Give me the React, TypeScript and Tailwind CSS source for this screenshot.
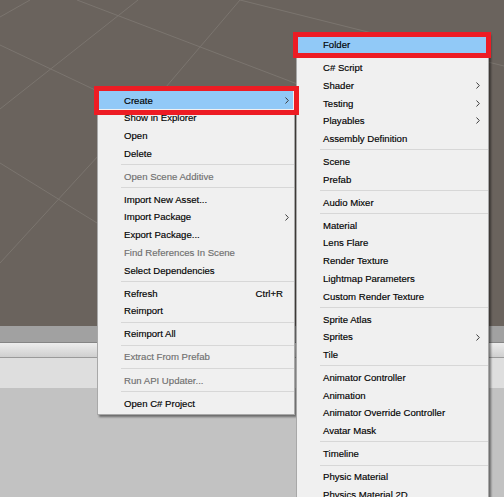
type Item = {
  label?: string
  sep?: boolean
  disabled?: boolean
  sub?: boolean
  shortcut?: string
  hi?: boolean
}

const leftItems: Item[] = [
  { label: 'Create', sub: true, hi: true },
  { label: 'Show in Explorer' },
  { label: 'Open' },
  { label: 'Delete' },
  { sep: true },
  { label: 'Open Scene Additive', disabled: true },
  { sep: true },
  { label: 'Import New Asset...' },
  { label: 'Import Package', sub: true },
  { label: 'Export Package...' },
  { label: 'Find References In Scene', disabled: true },
  { label: 'Select Dependencies' },
  { sep: true },
  { label: 'Refresh', shortcut: 'Ctrl+R' },
  { label: 'Reimport' },
  { sep: true },
  { label: 'Reimport All' },
  { sep: true },
  { label: 'Extract From Prefab', disabled: true },
  { sep: true },
  { label: 'Run API Updater...', disabled: true },
  { sep: true },
  { label: 'Open C# Project' },
]

const rightItems: Item[] = [
  { label: 'Folder', hi: true },
  { sep: true },
  { label: 'C# Script' },
  { label: 'Shader', sub: true },
  { label: 'Testing', sub: true },
  { label: 'Playables', sub: true },
  { label: 'Assembly Definition' },
  { sep: true },
  { label: 'Scene' },
  { label: 'Prefab' },
  { sep: true },
  { label: 'Audio Mixer' },
  { sep: true },
  { label: 'Material' },
  { label: 'Lens Flare' },
  { label: 'Render Texture' },
  { label: 'Lightmap Parameters' },
  { label: 'Custom Render Texture' },
  { sep: true },
  { label: 'Sprite Atlas' },
  { label: 'Sprites', sub: true },
  { label: 'Tile' },
  { sep: true },
  { label: 'Animator Controller' },
  { label: 'Animation' },
  { label: 'Animator Override Controller' },
  { label: 'Avatar Mask' },
  { sep: true },
  { label: 'Timeline' },
  { sep: true },
  { label: 'Physic Material' },
  { label: 'Physics Material 2D' },
  { sep: true },
  { label: 'GUI Skin' },
  { label: 'Custom Font' },
]

function Chevron() {
  return (
    <svg width="4" height="7" viewBox="0 0 4 7" className="block shrink-0">
      <path d="M0.5 0.5L3.3 3.5L0.5 6.5" fill="none" stroke="#3c3c3c" strokeWidth="1" />
    </svg>
  )
}

function Menu({ items, pr, redBox }: { items: Item[]; pr: string; redBox: string }) {
  return (
    <>
      {items.map((it, i) =>
        it.sep ? (
          <div key={i} className="h-[5.4px] flex items-center pl-[23px]">
            <div className="h-px w-full bg-[#d7d7d7]" />
          </div>
        ) : (
          <div
            key={i}
            className={`relative mx-px h-[17.7px] flex items-center pl-[25px] pt-px ${pr} ${it.hi ? 'bg-[#91c9f7]' : ''}`}
          >
            <span className={`flex-1 whitespace-nowrap ${it.disabled ? 'text-[#6f6f6f]' : 'text-black'}`}>{it.label}</span>
            {it.shortcut && <span className="mr-[2px] text-black">{it.shortcut}</span>}
            {it.sub ? <Chevron /> : <div className="w-[4px]" />}
            {it.hi && <div className={`absolute z-10 border-[#ed1c24] ${redBox}`} />}
          </div>
        )
      )}
    </>
  )
}

export default function App() {
  return (
    <div className="relative w-[504px] h-[497px] overflow-hidden flex flex-col font-['Liberation_Sans',Arial,sans-serif] text-[9.6px] leading-none [-webkit-text-stroke:0.15px]">
      {/* scene view */}
      <div className="h-[326px] shrink-0 bg-[#6a635d]">
        <svg width="504" height="326" className="block">
          <g stroke="#7b756f" strokeWidth="1" fill="none">
            <line x1="0" y1="17" x2="30" y2="0" />
            <line x1="0" y1="109" x2="138" y2="0" />
            <line x1="240" y1="0" x2="160" y2="94" />
            <line x1="0" y1="263" x2="110" y2="143" />
            <line x1="0" y1="45" x2="110" y2="97" />
            <line x1="77" y1="0" x2="300" y2="85" />
            <line x1="240" y1="0" x2="504" y2="66" />
            <line x1="0" y1="163" x2="110" y2="231" />
          </g>
        </svg>
      </div>
      {/* project window */}
      <div className="h-[16px] shrink-0 bg-[#a1a1a1]" />
      <div className="h-px shrink-0 bg-[#848484]" />
      <div className="h-[14px] shrink-0 bg-gradient-to-b from-[#ededed] to-[#cfcfcf]" />
      <div className="h-px shrink-0 bg-[#9a9a9a]" />
      <div className="h-[30px] shrink-0 bg-[#dedede]" />
      <div className="flex-1 bg-[#c2c2c2]" />

      {/* context menu */}
      <div className="absolute left-[97px] top-[88px] w-[198px] border border-[#a8a8a8] bg-[#f0f0f0] py-[2px] shadow-[2px_2px_2px_rgba(0,0,0,0.45)]">
        <Menu items={leftItems} pr="pr-[4px]" redBox="-left-[5.5px] -right-[5.5px] -top-[5px] -bottom-[6px] border-[5.5px]" />
      </div>

      {/* create submenu */}
      <div className="absolute left-[296px] top-[33px] w-[193px] border border-[#a8a8a8] bg-[#f0f0f0] pt-[1.5px] pb-[2px] shadow-[2px_2px_2px_rgba(0,0,0,0.45)]">
        <Menu items={rightItems} pr="pr-[7px]" redBox="-left-[5px] -right-[4px] -top-[3.5px] -bottom-[4.5px] border-[5px]" />
      </div>
    </div>
  )
}
